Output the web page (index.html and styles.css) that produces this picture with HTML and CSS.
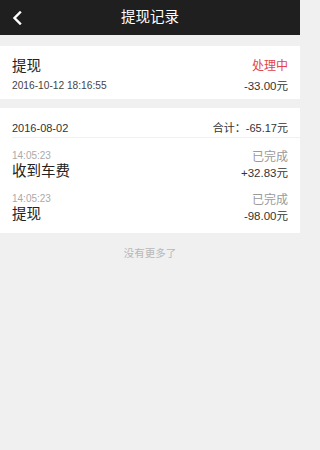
FILE: index.html
```html
<!DOCTYPE html>
<html lang="zh-CN">
<head>
<meta charset="utf-8">
<title>提现记录</title>
<link rel="stylesheet" href="styles.css">
</head>
<body>
<header class="topbar">
  <span class="back">
    <svg width="10" height="14" viewBox="0 0 10 14"><path d="M8 1.5 L2.5 7 L8 12.5" fill="none" stroke="#fff" stroke-width="2.4" stroke-linecap="square"/></svg>
  </span>
  <h1 class="title">提现记录</h1>
  <span></span>
</header>

<section class="card first">
  <div class="row">
    <span class="name">提现</span>
    <span class="status red">处理中</span>
  </div>
  <div class="row sub">
    <span class="date">2016-10-12 18:16:55</span>
    <span class="amount">-33.00元</span>
  </div>
</section>

<section class="card group">
  <div class="dayrow">
    <span class="day">2016-08-02</span>
    <span class="total">合计：-65.17元</span>
  </div>
  <div class="item">
    <div class="left">
      <span class="time">14:05:23</span>
      <span class="name">收到车费</span>
    </div>
    <div class="right">
      <span class="status gray">已完成</span>
      <span class="amount">+32.83元</span>
    </div>
  </div>
  <div class="item">
    <div class="left">
      <span class="time">14:05:23</span>
      <span class="name">提现</span>
    </div>
    <div class="right">
      <span class="status gray">已完成</span>
      <span class="amount">-98.00元</span>
    </div>
  </div>
</section>

<p class="nomore">没有更多了</p>
</body>
</html>
```

FILE: styles.css
```css
html, body {
  margin: 0;
  padding: 0;
}
html {
  background: #f0f0f0;
}
body {
  width: 300px;
  min-height: 450px;
  background: #f0f0f0;
  font-family: "Liberation Sans", "Noto Sans CJK SC", sans-serif;
  color: #222;
}
.topbar {
  height: 35px;
  background: #1f1f1f;
  display: grid;
  grid-template-columns: 40px 1fr 40px;
  align-items: center;
}
.back {
  display: flex;
  padding-left: 12px;
  padding-top: 1px;
}
.title {
  margin: 0;
  text-align: center;
  color: #fff;
  font-size: 14.5px;
  font-weight: normal;
  line-height: 35px;
}
.card {
  background: #fff;
}
.first {
  margin-top: 11px;
  padding: 11px 12px 6px;
}
.row {
  display: flex;
  justify-content: space-between;
  align-items: center;
  line-height: 18px;
}
.row.sub {
  margin-top: 4px;
  line-height: 14px;
}
.name {
  font-size: 14.5px;
  color: #222;
}
.status {
  font-size: 12px;
}
.red {
  color: #e0434c;
}
.gray {
  color: #9a9a9a;
}
.date {
  font-size: 10.2px;
  color: #444;
}
.amount {
  font-size: 11.5px;
  color: #333;
}
.group {
  margin-top: 9px;
  padding-bottom: 9px;
}
.dayrow {
  margin-left: 12px;
  padding: 13px 12px 2px 0;
  display: flex;
  justify-content: space-between;
  line-height: 14px;
  border-bottom: 1px solid #f0f0f0;
}
.day {
  font-size: 11px;
  color: #333;
}
.total {
  font-size: 11px;
  color: #333;
}
.item {
  display: flex;
  justify-content: space-between;
  padding: 11px 12px 0;
}
.left, .right {
  display: flex;
  flex-direction: column;
}
.right {
  align-items: flex-end;
}
.time {
  font-size: 10px;
  line-height: 13px;
  color: #aaa;
}
.left .name {
  line-height: 19px;
}
.right .status {
  line-height: 16px;
}
.right .amount {
  line-height: 16px;
}
.nomore {
  margin: 0;
  padding-top: 14px;
  text-align: center;
  font-size: 10.5px;
  line-height: 12px;
  color: #b8b8b8;
}
```
